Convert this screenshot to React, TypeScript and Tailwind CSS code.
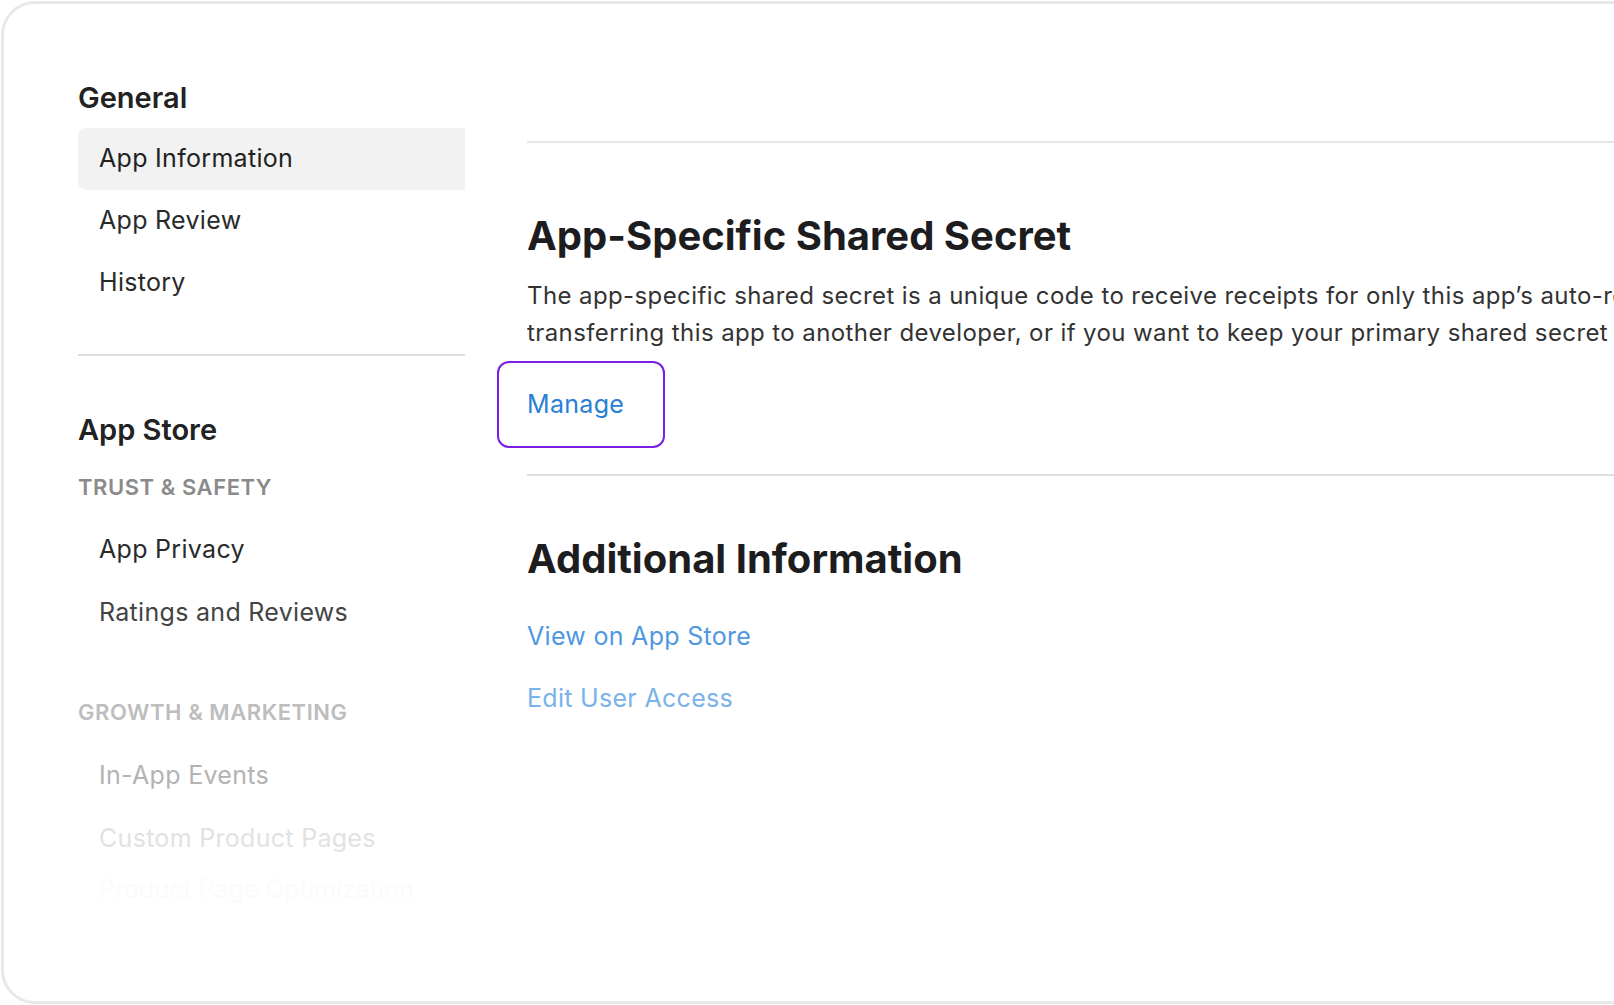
import React from 'react';

const font = { fontFamily: 'Inter, "Noto Sans", sans-serif' };

const App: React.FC = () => {
  return (
    <div className="w-[1614px] h-[1005px] overflow-hidden bg-white" style={font}>
      <div className="w-[1680px] h-[1003px] mt-[1px] ml-[1px] border-[3px] border-[#e8e8e8] rounded-[34px] flex pt-[76px] pl-[74px]">
        {/* sidebar */}
        <div className="w-[387px] shrink-0">
          <h3 className="text-[29px] font-semibold text-[#222] h-[48px] leading-[36px]">General</h3>
          <div className="h-[62px] rounded-l-lg bg-[#f2f2f2] flex items-center pl-[21px] text-[25px] text-[#222] tracking-[0.3px]">App Information</div>
          <div className="h-[62px] flex items-center pl-[21px] text-[25px] text-[#2a2a2a] tracking-[0.3px]">App Review</div>
          <div className="h-[62px] flex items-center pl-[21px] text-[25px] text-[#2a2a2a] tracking-[0.3px]">History</div>
          <div className="h-[2px] bg-[#dedede] mt-[40px]"></div>
          <h3 className="text-[29px] font-semibold text-[#222] mt-[54px] h-[48px] leading-[40px]">App Store</h3>
          <div className="h-[50px] mt-[4px] flex items-center text-[22px] font-semibold tracking-wide text-[#8a8a8a]">TRUST &amp; SAFETY</div>
          <div className="h-[64px] mt-[6px] flex items-center pl-[21px] text-[25px] text-[#2a2a2a] tracking-[0.3px]">App Privacy</div>
          <div className="h-[62px] flex items-center pl-[21px] text-[25px] text-[#444] tracking-[0.3px]">Ratings and Reviews</div>
          <div className="h-[52px] mt-[42px] flex items-center text-[22px] font-semibold tracking-wide text-[#bdbdbd]">GROWTH &amp; MARKETING</div>
          <div className="h-[64px] mt-[6px] flex items-center pl-[21px] text-[25px] text-[#b3b3b3] tracking-[0.3px]">In-App Events</div>
          <div className="h-[62px] flex items-center pl-[21px] text-[25px] text-[#e2e2e2] tracking-[0.3px]">Custom Product Pages</div>
          <div className="h-[40px] flex items-center pl-[21px] text-[25px] text-[#fbfbfb] overflow-hidden">Product Page Optimization</div>
        </div>
        {/* main */}
        <div className="flex-1 min-w-0 ml-[62px] mt-[4px]">
          <div className="h-[2px] bg-[#e6e6e6] mt-[57px]"></div>
          <h2 className="mt-[68px] text-[40px] font-bold text-[#1d1d1f] leading-[50px]">App-Specific Shared Secret</h2>
          <p className="mt-[16px] text-[24px] text-[#333] leading-[37px] whitespace-nowrap tracking-[0.4px] overflow-hidden">
            The app-specific shared secret is a unique code to receive receipts for only this app’s auto-renewable subscriptions.
            <br />
            transferring this app to another developer, or if you want to keep your primary shared secret private.
          </p>
          <div className="mt-[10px] -ml-[30px] w-[168px] h-[87px] border-[2.5px] border-[#7a1ee6] rounded-xl flex items-center pl-[28px] text-[25px] text-[#2a7fd4] tracking-[0.3px]">
            Manage
          </div>
          <div className="h-[2px] bg-[#e0e0e0] mt-[26px]"></div>
          <h2 className="mt-[58px] text-[40px] font-bold text-[#1d1d1f] leading-[50px]">Additional Information</h2>
          <div className="mt-[22px] h-[62px] flex items-center text-[25px] text-[#4f98e0] tracking-[0.3px]">View on App Store</div>
          <div className="h-[62px] flex items-center text-[25px] text-[#7ab2ea] tracking-[0.3px]">Edit User Access</div>
        </div>
      </div>
    </div>
  );
};

export default App;
